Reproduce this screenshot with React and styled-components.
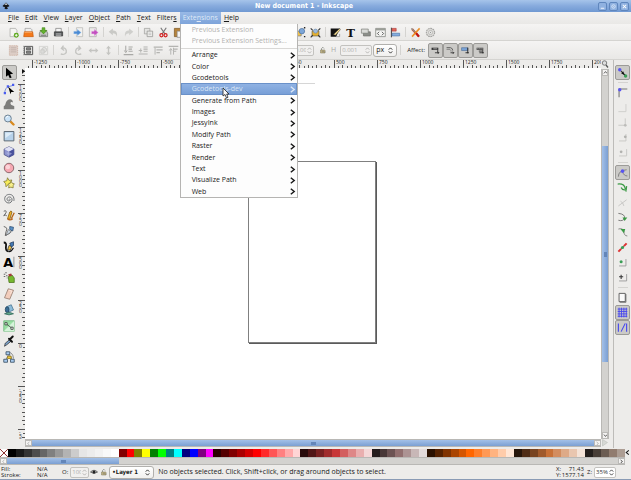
import React from "react";
import styled, { createGlobalStyle, css } from "styled-components";

const GlobalStyle = createGlobalStyle`
  * {
    box-sizing: border-box;
  }
  body {
    margin: 0;
    background: #edecea;
    color: #1a1a1a;
    font-family: "Open Sans", "Noto Sans", sans-serif;
    font-size: 7px;
    line-height: 10px;
  }
  button, input, select {
    font: inherit;
    color: inherit;
    margin: 0;
    padding: 0;
    border: 0;
    background: none;
    min-width: 0;
  }
  svg {
    display: block;
    flex: none;
  }
`;

const ICONS = {
  logo: (
    <>
      <path d="M8 1 L15 8 Q13 10 10 10 L12 13 Q8 16 5 13 L6 10 Q2 10 1 8 Z" fill="#16181c" />
      <path d="M8 2 L11 5 L9 6 L8 5 L6 6 L5 5 Z" fill="#d8dfe8" />
    </>
  ),
  minimize: <path d="M4 12 H12" stroke="#fff" strokeWidth="2" />,
  maximize: (
    <>
      <circle cx="8" cy="8" r="4" fill="none" stroke="#dce8f7" strokeWidth="2" />
      <circle cx="8" cy="8" r="1" fill="#fff" />
    </>
  ),
  close: <path d="M4 4 L12 12 M12 4 L4 12" stroke="#fff" strokeWidth="2.4" />,
  fileNew: (
    <>
      <path d="M3 2 H11 L13 5 V14 H3 Z" fill="#f4f4f2" stroke="#a5a5a2" />
      <circle cx="12" cy="12" r="3.6" fill="#58a618" />
      <path d="M12 10 V14 M10 12 H14" stroke="#fff" strokeWidth="1.3" />
    </>
  ),
  open: (
    <>
      <path d="M3 2 H11 L13 4 V9 H3 Z" fill="#eee" stroke="#999" />
      <path d="M2 7 H14 L15 14 H1 Z" fill="#f47a1c" stroke="#c95a08" />
      <path d="M2 8 H13" stroke="#fbb477" />
    </>
  ),
  save: (
    <>
      <path d="M2 9 L4 5 H12 L14 9 V14 H2 Z" fill="#c7c9c6" stroke="#6b6e69" />
      <path d="M6 1 H10 V5 H13 L8 10 L3 5 H6 Z" fill="#63b32e" stroke="#3c8010" strokeWidth=".8" />
      <path d="M4 12 H12" stroke="#555" />
    </>
  ),
  print: (
    <>
      <path d="M4 2 H12 V8 H4 Z" fill="#f5f5f5" stroke="#777" />
      <path d="M2 7 H14 V13 H2 Z" fill="#55585a" stroke="#333" />
      <path d="M4 10 H12 M4 12 H12" stroke="#ddd" />
    </>
  ),
  importFile: (
    <>
      <path d="M5 1 H14 V14 H5 Z" fill="#f2f2f0" stroke="#b4b4b0" />
      <path d="M1 6 H6 V3 L12 8 L6 13 V10 H1 Z" fill="#4b8bd3" stroke="#dce9f7" strokeWidth=".6" />
    </>
  ),
  exportFile: (
    <>
      <path d="M2 1 H12 V14 H2 Z" fill="#ecebe9" stroke="#a8a8a5" />
      <path d="M5 6 H9 V3 L15 8 L9 13 V10 H5 Z" fill="#c34fc0" stroke="#f3d7f2" strokeWidth=".6" />
    </>
  ),
  undo: <path d="M7 2 V5 C12 5 14 8 13 14 C12 10 10 9 7 9 V12 L1 7 Z" fill="#c9c9c6" />,
  redo: <path d="M9 2 V5 C4 5 2 8 3 14 C4 10 6 9 9 9 V12 L15 7 Z" fill="#cfcfcc" />,
  copy: (
    <>
      <path d="M2 2 H10 V10 H2 Z" fill="#e4e4e2" stroke="#9b9b98" />
      <path d="M6 6 H14 V14 H6 Z" fill="#ededeb" stroke="#8d8d8a" />
      <path d="M8 9 H12 M8 11 H12" stroke="#bbb" />
    </>
  ),
  cut: (
    <>
      <path d="M4 1 L10 10 M12 1 L6 10" stroke="#777" strokeWidth="1.6" />
      <circle cx="5" cy="12" r="2.2" fill="none" stroke="#d11f1f" strokeWidth="1.8" />
      <circle cx="11" cy="12" r="2.2" fill="none" stroke="#d11f1f" strokeWidth="1.8" />
    </>
  ),
  paste: (
    <>
      <path d="M2 2 H12 V14 H2 Z" fill="#b5833a" stroke="#7a5520" />
      <path d="M6 6 H14 V15 H6 Z" fill="#f4f4f4" stroke="#888" />
    </>
  ),
  group: (
    <>
      <path d="M2 6 H9 V13 H2 Z" fill="#f0c14b" stroke="#7c7c78" />
      <circle cx="10" cy="6" r="4" fill="#7ca6d8" stroke="#4d6f9b" />
      <path d="M1 1 H3 M13 1 H15 M1 14 H3 M13 14 H15" stroke="#222" strokeWidth="2" />
    </>
  ),
  ungroup: (
    <>
      <path d="M3 6 H13 V13 H3 Z" fill="#e7b12e" stroke="#6a6040" />
      <circle cx="8" cy="6" r="3" fill="#9dbbdc" stroke="#6683a6" strokeWidth=".8" />
      <path d="M1 2 L4 5 M15 2 L12 5 M1 15 L4 12 M15 15 L12 12" stroke="#333" strokeWidth="1.6" />
    </>
  ),
  fill: (
    <>
      <path d="M1 2 H14 L9 14 H1 Z" fill="#111" />
      <path d="M5 11 L14 2 L15 4 L8 12 Z" fill="#f2d98b" stroke="#333" strokeWidth=".7" />
      <path d="M9 14 H14 V10" fill="none" stroke="#888" />
    </>
  ),
  text: (
    <text x="8" y="14" textAnchor="middle" fontFamily="DejaVu Serif, serif" fontWeight="bold" fontSize="17" fill="#111">
      T
    </text>
  ),
  layers: (
    <>
      <path d="M5 7 H15 V13 H5 Z" fill="#8b8e89" stroke="#6a6c68" />
      <path d="M2 3 H12 V9 H2 Z" fill="#d9dad7" stroke="#777a75" />
    </>
  ),
  xml: (
    <>
      <path d="M1 2 H15 V14 H1 Z" fill="#f4f4f2" stroke="#777a75" />
      <path d="M1 2 H15 V5 H1 Z" fill="#9a9d97" />
      <path d="M6 7 L3.5 9.5 L6 12 M10 7 L12.5 9.5 L10 12" fill="none" stroke="#444" strokeWidth="1.2" />
    </>
  ),
  align: (
    <>
      <path d="M2 1 V15" stroke="#333" strokeWidth="1.4" />
      <path d="M3 2 H9 V6 H3 Z" fill="#e0675b" stroke="#a33" strokeWidth=".8" />
      <path d="M3 9 H14 V13 H3 Z" fill="#86aede" stroke="#3d669d" strokeWidth=".8" />
    </>
  ),
  prefs: (
    <>
      <path d="M3 3 L13 14" stroke="#d0451c" strokeWidth="3" />
      <path d="M2 2 L7 7" stroke="#8c8f8a" strokeWidth="2" />
      <path d="M14 2 L3 14" stroke="#eb8e26" strokeWidth="2.2" />
      <path d="M9 9 L13 14" stroke="#c01515" strokeWidth="3" />
    </>
  ),
  docPrefs: (
    <>
      <circle cx="8" cy="8" r="6" fill="#dedddb" stroke="#a3a3a0" strokeWidth="1.6" strokeDasharray="2.5 .9" />
      <circle cx="8" cy="8" r="3" fill="#efefed" stroke="#acaca8" />
      <circle cx="8" cy="8" r="1" fill="#999" />
    </>
  ),
  selectAll: (
    <>
      <path d="M2 1 H14 V15 H2 Z" fill="#dccdc6" stroke="#c9a898" strokeDasharray="2 1" />
      <path d="M4 4 H12 M4 7 H12 M4 10 H12" stroke="#b9aaa4" />
    </>
  ),
  selectLayers: (
    <>
      <path d="M2 2 H14 V14 H2 Z" fill="#e8e8e6" stroke="#555" strokeWidth="1.4" />
      <path d="M5 4 H11 V7 H5 Z M5 9 H11 V12 H5 Z" fill="#888" stroke="#444" />
      <path d="M0 1 V15" stroke="#555" strokeDasharray="2 1" />
    </>
  ),
  deselect: (
    <>
      <path d="M2 2 H14 V14 H2 Z" fill="none" stroke="#cbcbc8" />
      <circle cx="9" cy="7" r="3.5" fill="#e2e2e0" stroke="#c1c1be" />
      <path d="M4 7 H9 V12 H4 Z" fill="#dcdcda" stroke="#c4c4c1" />
    </>
  ),
  rotateLeft: <path d="M4 13 C9 15 13 12 12 8 C11 4 8 4 6 5 M8 1 L5 5 L9 8" fill="none" stroke="#c4c4c1" strokeWidth="2" />,
  rotateRight: <path d="M12 13 C7 15 3 12 4 8 C5 4 8 4 10 5 M8 1 L11 5 L7 8" fill="none" stroke="#c4c4c1" strokeWidth="2" />,
  flipH: <path d="M1 8 L5 4.5 V7 H11 V4.5 L15 8 L11 11.5 V9 H5 V11.5 Z" fill="#c4c4c1" />,
  flipV: <path d="M8 1 L11.5 5 H9 V11 H11.5 L8 15 L4.5 11 H7 V5 H4.5 Z" fill="#c4c4c1" />,
  lower: (
    <>
      <path d="M1 14 H15 M8 3 H14 M8 6 H13 M8 9 H14" stroke="#a9a9a6" strokeWidth="1.6" />
      <path d="M4 1 V9 M2 8 L4 11 L6 8" fill="none" stroke="#a3a3a0" strokeWidth="1.4" />
    </>
  ),
  lowerOne: (
    <>
      <path d="M8 3 H14 M8 6 H14 M1 13 H14 M8 9 H14" stroke="#b4b4b1" strokeWidth="1.6" />
      <path d="M4 5 V11 M1 8 H6" stroke="#b4b4b1" strokeWidth="1.4" />
    </>
  ),
  raiseOne: (
    <>
      <path d="M1 3 H14 M5 7 H14 M5 11 H10" stroke="#b4b4b1" strokeWidth="1.8" />
      <path d="M3 4 V14" stroke="#b4b4b1" strokeWidth="1.4" />
    </>
  ),
  raise: (
    <>
      <path d="M1 2 H15 M8 6 H14 M8 9 H12" stroke="#b4b4b1" strokeWidth="1.6" />
      <path d="M4 14 V6 M2 8 L4 5 L6 8 M8 4 V14" fill="none" stroke="#b4b4b1" strokeWidth="1.4" />
    </>
  ),
  lock: (
    <>
      <path d="M5 8 V5 Q8 0 10 5" fill="none" stroke="#888a85" strokeWidth="1.6" />
      <path d="M3 8 H12 V14 H3 Z" fill="#d9c98f" stroke="#77705a" />
      <path d="M5 10 H10 M5 12 H13" stroke="#555" />
    </>
  ),
  affectStroke: (
    <>
      <path d="M1 3 H13 V7 H1 Z" fill="#333" />
      <path d="M4 5 H11" stroke="#eee" />
      <path d="M12 7 V12 M7 12 H14 M12 10 L14 12 L12 14" fill="none" stroke="#222" strokeWidth="1.4" />
    </>
  ),
  affectCorner: (
    <>
      <path d="M1 3 H8 Q12 4 12 8" fill="none" stroke="#555" strokeWidth="1.6" />
      <path d="M1 6 H7 Q9 7 9 10" fill="none" stroke="#777" strokeWidth="1.4" />
      <path d="M8 12 H14 M12 10 L14 12 L12 14" fill="none" stroke="#222" strokeWidth="1.4" />
    </>
  ),
  affectGradient: (
    <>
      <path d="M1 3 H12 V8 H1 Z" fill="#7aa3d6" stroke="#4a6a93" />
      <path d="M12 3 V13 M8 12 H14" stroke="#222" strokeWidth="1.6" />
    </>
  ),
  affectPattern: (
    <>
      <path d="M1 3 H13 V7 H1 Z" fill="#555" />
      <path d="M2 4 H12" stroke="#bbb" strokeDasharray="2 1" />
      <path d="M12 7 V13 M6 12 H14 M5 9 H11" stroke="#222" strokeWidth="1.5" />
    </>
  ),
  selector: <path d="M4 1 L4 13 L7 10.5 L9 15 L11.5 14 L9.5 9.5 L13.5 9 Z" fill="#000" />,
  node: (
    <>
      <path d="M2 14 Q3 6 7 5 L14 3" fill="none" stroke="#6f86d8" strokeWidth="1.2" />
      <path d="M1 12 H4 V15 H1 Z M5 3 H8 V6 H5 Z M12 1 H15 V4 H12 Z" fill="#4a5cf0" />
      <path d="M7 5 L15 12 L11 12 L10 15 Z" fill="#000" />
    </>
  ),
  tweak: <path d="M1 15 V11 C4 10 3 5 6 3 C9 0 14 2 13 6 C12 5 10 5 10 7 C10 10 14 10 15 11 V15 Z" fill="#7d7d7b" />,
  zoom: (
    <>
      <path d="M9 9 L14 14" stroke="#d98a1f" strokeWidth="3.2" strokeLinecap="round" />
      <circle cx="6.5" cy="6" r="4.6" fill="#c9e2f7" stroke="#6d7f90" strokeWidth="1.3" />
      <path d="M4 5 Q5 3 7 3" fill="none" stroke="#fff" strokeWidth="1.3" />
    </>
  ),
  rect: (
    <>
      <path d="M1.5 2 H14.5 V14.5 H1.5 Z" fill="#b7d2ea" stroke="#55606a" strokeWidth="1.2" />
      <path d="M3 3.5 H13 L3 11 Z" fill="#dcebf7" />
    </>
  ),
  box: (
    <>
      <path d="M8 1 L14.5 4 V11.5 L8 15 L1.5 11.5 V4 Z" fill="#8d93cf" stroke="#4a4e80" />
      <path d="M8 1 L14.5 4 L8 7.5 L1.5 4 Z" fill="#dfe1f5" />
      <path d="M8 7.5 L14.5 4 V11.5 L8 15 Z" fill="#4a529c" />
      <path d="M4 9 L8 8 L12 10 L8 13 Z" fill="#b8bce6" opacity=".6" />
    </>
  ),
  ellipse: (
    <>
      <circle cx="8" cy="8" r="6.3" fill="#f6a8b2" stroke="#7b565b" strokeWidth="1.1" />
      <circle cx="6.5" cy="6.5" r="3" fill="#fbd3d8" />
    </>
  ),
  star: (
    <>
      <path d="M6 1 L8 4.5 L12 4 L9.5 7.5 L11 11 L7 10 L4 13 L3.5 9 L1 6 L5 5 Z" fill="#f7ec5a" stroke="#7b7430" />
      <path d="M11 6 L12.5 8.5 L15 9 L13.5 11.5 L13.5 14.5 L10.5 13.5 L7.5 14.5 L8 11.5 L6.5 9.5 L9.5 8.5 Z" fill="#f9f08a" stroke="#7b7430" />
    </>
  ),
  spiral: (
    <path
      d="M8 8.5 C9 7 10.5 9 9 10.2 C7 11.5 4.8 9.5 5.5 7.3 C6.5 4.5 11 4.6 12 8 C12.8 11.5 9.5 14 6.5 13.2 C2.5 12 1.5 8 2.8 5.2 C4.5 1.5 10 .8 12.8 3.5 C14.5 5.5 15 8 14.5 10.5"
      fill="none"
      stroke="#62666a"
      strokeWidth="1.2"
    />
  ),
  pencil: (
    <>
      <path d="M1 3 Q5 1 4 5 L1 9 Q3 7 5 9" fill="none" stroke="#666" strokeWidth="1.3" />
      <path d="M6 13 L9 4 Q11 1 12 4 L9 14 Z" fill="#f0b429" stroke="#7d5a12" />
      <path d="M11 13 L15 5 M6 13 Q9 16 13 13" fill="none" stroke="#b7651c" strokeWidth="1.8" />
    </>
  ),
  bezier: (
    <>
      <path d="M1 2 Q7 3 4 9 L3 14 L9 11 L12 6" fill="#e9e9e7" stroke="#4d4d4d" strokeWidth="1.1" />
      <path d="M9 2 L14 3 L13 8 L9 6 Z" fill="#5b93c9" stroke="#2c4b6d" />
      <path d="M7 6 L11 9 L4 14 Z" fill="#c9d5df" stroke="#555" strokeWidth=".7" />
    </>
  ),
  calligraphy: (
    <>
      <path d="M1 2 Q5 2 4 7 Q3 13 7 14" fill="none" stroke="#111" strokeWidth="2.4" />
      <path d="M6 12 L8 6 L12 7 L10 12 Z" fill="#f0c340" stroke="#333" />
      <path d="M9 3 L14 1 L14 6 L11 8 Z" fill="#447ab5" stroke="#223c5c" />
      <path d="M7 14 Q11 15 14 9" fill="none" stroke="#111" strokeWidth="1.5" />
    </>
  ),
  letter: (
    <>
      <text x="7" y="14" textAnchor="middle" fontFamily="DejaVu Sans, sans-serif" fontWeight="bold" fontSize="17" fill="#000">
        A
      </text>
      <path d="M14.5 1 V15" stroke="#777" />
    </>
  ),
  spray: (
    <>
      <path d="M7 6 L12 4 L15 8 V14 H8 Z" fill="#76b82f" stroke="#4a701c" />
      <path d="M7 3 L11 2 L12 5 L8 6 Z" fill="#a33c3c" />
      <path d="M1 3 H3 M4 5 H6 M1 6 H3 M3 1 H5 M5 8 H6" stroke="#666" strokeWidth="1.3" />
    </>
  ),
  eraser: (
    <>
      <path d="M7 1 L14 3 L9 15 L2 13 Z" fill="#f2cdbc" stroke="#8e7467" />
      <path d="M8 3 L12 4 L10 8" fill="none" stroke="#fbeae2" />
    </>
  ),
  bucket: (
    <>
      <path d="M4 4 L11 1 L14 8 L7 11 Z" fill="#8dbcd9" stroke="#44708f" />
      <ellipse cx="5.5" cy="7.5" rx="2.5" ry="3.8" fill="#3a6d94" stroke="#25445c" />
      <path d="M2 13 Q8 9 14 13 Q8 16 2 13 Z" fill="#64a98e" stroke="#33685a" />
    </>
  ),
  gradient: (
    <>
      <path d="M1 1 H15 V15 H1 Z" fill="#9adfa4" stroke="#67b375" />
      <path d="M1 15 L15 1 V15 Z" fill="#d5f3d9" />
      <path d="M4 5 L12 11" stroke="#333" />
      <path d="M2.5 3.5 H5.5 V6.5 H2.5 Z M10.5 9.5 H13.5 V12.5 H10.5 Z" fill="#e8f5ea" stroke="#333" />
    </>
  ),
  dropper: (
    <>
      <path d="M2 15 L3 11 L9 6 L11 8 L5 13 Z" fill="#7ba3cc" stroke="#333" />
      <path d="M8 5 L12 9 M9 6 L13 2" stroke="#111" strokeWidth="2.6" strokeLinecap="round" />
    </>
  ),
  connector: (
    <>
      <path d="M8 4 L4 11 M8 4 L12 11 M10 2 Q14 5 14 10" fill="none" stroke="#777" strokeWidth="1.1" />
      <path d="M4 1 H9 V5 H4 Z M1 11 H6 V15 H1 Z M10 11 H15 V15 H10 Z" fill="#a8cbef" stroke="#3c5064" strokeWidth="1.1" />
      <path d="M6 7 H11 V10 H6 Z" fill="#f1cb35" stroke="#8d7315" />
    </>
  ),
  snap: (
    <>
      <path d="M4 4 L12 12" stroke="#222" strokeWidth="1.5" />
      <circle cx="4" cy="4" r="2.5" fill="#5a55f0" />
      <circle cx="12.5" cy="13" r="2.5" fill="#3a9e55" />
      <path d="M6 9 L9 6 L11 12 Z" fill="#111" />
    </>
  ),
  snapBox: (
    <>
      <path d="M3 15 V3 H15" fill="none" stroke="#777" strokeWidth="1.6" />
      <circle cx="4" cy="4" r="2.5" fill="#5a55f0" />
    </>
  ),
  snapEdge: <path d="M2 14 H13 V3" fill="none" stroke="#cfcfcc" strokeWidth="1.4" />,
  snapCorner: (
    <>
      <path d="M2 12 H12 V2" fill="none" stroke="#c9c9c6" strokeWidth="1.4" />
      <circle cx="12" cy="12" r="2" fill="#bdbdba" />
    </>
  ),
  snapMid: (
    <>
      <path d="M3 13 H13 V3" fill="none" stroke="#c9c9c6" strokeWidth="1.4" />
      <circle cx="12" cy="7" r="2" fill="#b2b2af" />
    </>
  ),
  snapCenter: (
    <>
      <path d="M3 13 H14 V3" fill="none" stroke="#c9c9c6" strokeWidth="1.4" />
      <circle cx="6" cy="7" r="2" fill="#b2b2af" />
    </>
  ),
  snapNode: (
    <>
      <path d="M2 14 Q2 5 14 4 M8 7 Q10 13 15 13" fill="none" stroke="#777" strokeWidth="1.3" />
      <circle cx="8" cy="6" r="2.6" fill="#5a55f0" />
    </>
  ),
  snapPath: (
    <path d="M1 3 Q11 2 12 10 M6 8 Q8 13 14 11 M14 6 L13 14" fill="none" stroke="#3b9a45" strokeWidth="1.8" />
  ),
  snapCross: <path d="M2 13 L14 4 M5 6 Q9 8 10 13" fill="none" stroke="#c4c4c1" strokeWidth="1.3" />,
  snapCusp: (
    <>
      <path d="M2 2 Q12 3 11 9 Q9 14 2 12" fill="none" stroke="#666" strokeWidth="1.2" />
      <path d="M8 8 H15 L11 13 Z" fill="#3b9a45" />
    </>
  ),
  snapSmooth: (
    <>
      <path d="M2 3 Q8 1 10 6 Q10 13 15 13" fill="none" stroke="#777" strokeWidth="1.2" />
      <path d="M5 3 L12 3 L10 9 Z" fill="#3b9a45" />
    </>
  ),
  snapLine: (
    <>
      <path d="M3 13 L13 3" stroke="#555" strokeWidth="1.2" />
      <path d="M2 14 L6 10 M10 6 L14 2" stroke="#d33" strokeWidth="3" />
      <circle cx="8" cy="8" r="2.3" fill="#3a9e55" />
    </>
  ),
  snapObject: (
    <>
      <path d="M3 13 H13 V3" fill="none" stroke="#999" strokeWidth="1.3" />
      <circle cx="6" cy="7" r="2.2" fill="#3a9e55" />
    </>
  ),
  snapRotation: (
    <>
      <path d="M3 13 H14 V3" fill="none" stroke="#999" strokeWidth="1.3" />
      <path d="M6 4 V10 M3 7 H9" stroke="#333" strokeWidth="1.5" />
    </>
  ),
  snapPage: (
    <>
      <path d="M3 2 H12 V14 H3 Z" fill="#fafafa" stroke="#555" strokeWidth="1.3" />
      <path d="M13 3 V15 H4" fill="none" stroke="#555" />
    </>
  ),
  snapGrid: (
    <path d="M3 1 V15 M6.5 1 V15 M10 1 V15 M13.5 1 V15 M1 3 H15 M1 6.5 H15 M1 10 H15 M1 13.5 H15" stroke="#4545ef" strokeWidth="1.3" />
  ),
  snapGuide: <path d="M2 2 V14 M6 14 L12 2 M14 2 V14" stroke="#4545ef" strokeWidth="1.6" />,
  eye: (
    <>
      <path d="M1 8 Q8 1 15 8 Q8 14 1 8 Z" fill="#d5d5d2" stroke="#444" strokeWidth="1.5" />
      <circle cx="8" cy="8" r="3" fill="#222" />
    </>
  ),
  view: (
    <>
      <circle cx="7" cy="6" r="4.5" fill="#ddd" stroke="#666" strokeWidth="1.6" />
      <path d="M10 10 L14 15" stroke="#555" strokeWidth="2.6" />
    </>
  ),
  cms: <path d="M3 1 L13 7 L3 14 Z" fill="#d6d8d4" stroke="#b5b8b3" />,
  up: <path d="M3 11 L8 5 L13 11" fill="none" stroke="#444" strokeWidth="2.6" />,
  down: <path d="M3 5 L8 11 L13 5" fill="none" stroke="#444" strokeWidth="2.6" />,
  left: <path d="M11 3 L5 8 L11 13" fill="none" stroke="currentColor" strokeWidth="2.4" />,
  right: <path d="M5 3 L11 8 L5 13" fill="none" stroke="currentColor" strokeWidth="2.6" />,
  spin: <path d="M4 6 L8 2 L12 6 M4 10 L8 14 L12 10" fill="none" stroke="currentColor" strokeWidth="2" />,
};

const Icon = ({ name, size = 12 }) => (
  <svg width={size} height={size} viewBox="0 0 16 16" aria-hidden="true">
    {ICONS[name]}
  </svg>
);

const Window = styled.div`
  display: flex;
  flex-direction: column;
  min-height: 100vh;
  border-bottom: 1px solid #8a9bb5;
`;

const TitleBar = styled.header`
  display: flex;
  align-items: center;
  height: 12px;
  padding: 0 2px;
  background: linear-gradient(#a6c4ea, #86aadd 50%, #7099d2);
  color: #fff;

  h1 {
    flex: 1;
    margin: 0;
    text-align: center;
    font: bold 7px/12px "DejaVu Sans Condensed", "DejaVu Sans", sans-serif;
  }
`;

const TitleButtons = styled.div`
  display: flex;
  gap: 2px;
`;

const TitleButton = styled.button`
  display: grid;
  place-items: center;
  width: 9px;
  height: 9px;
  border: 1px solid #5f86bd;
  border-radius: 2px;
  background: #8fb1e0;
`;

const MenuBar = styled.nav`
  display: flex;
  height: 12px;
  padding-left: 5px;
  background: linear-gradient(#f3f2f1, #e9e8e6);
`;

const MenuItem = styled.button`
  height: 12px;
  padding: 0 3px;
  line-height: 12px;
  ${(p) =>
    p.$active &&
    css`
      background: linear-gradient(#98b9e6, #7ea4da);
      color: #dfe9f6;
    `}
`;

const MenuHolder = styled.div`
  position: relative;
  z-index: 2;
`;

const Popup = styled.div`
  position: absolute;
  top: 100%;
  left: 0;
  width: 118px;
  border: 1px solid #b5b4b2;
  border-top: 0;
  background: #fdfdfd;
`;

const PopupRows = styled.div`
  display: grid;
  grid-auto-rows: 1fr;
  height: ${(p) => p.$height}px;
`;

const PopupSeparator = styled.hr`
  height: 3px;
  margin: 0;
  border: 0;
  border-bottom: 1px solid #d9d8d6;
`;

const PopupItem = styled.button`
  position: relative;
  display: flex;
  align-items: center;
  justify-content: space-between;
  padding: 1px 0 0 11px;
  text-align: left;
  white-space: nowrap;

  &:disabled {
    color: #b3b2b0;
  }
  ${(p) =>
    p.$active &&
    css`
      background: linear-gradient(#92b4e4, #759dd6);
      outline: 1px solid #6a91c9;
      outline-offset: -1px;
      color: #dbe6f5;
    `}
`;

const Pointer = styled.svg`
  position: absolute;
  left: 41px;
  top: 4px;
  z-index: 3;
`;

const ToolBar = styled.div`
  display: flex;
  align-items: center;
  height: ${(p) => p.$height}px;
  padding-left: 6px;
  border-bottom: 1px solid #d5d4d1;
  background: linear-gradient(#f5f4f3, #e9e8e6);
`;

const ToolGroup = styled.div`
  display: flex;
  align-items: center;
  gap: ${(p) => p.$gap || 0}px;
  flex: ${(p) => (p.$wide ? "0 0 287px" : "none")};
`;

const ToolButton = styled.button`
  display: grid;
  place-items: center;
  width: 15px;
  height: 15px;
  border-radius: 2px;
  border: 1px solid ${(p) => (p.$pressed ? "#9c9b98" : "transparent")};
  background: ${(p) => (p.$pressed ? "#cbcac7" : "none")};
`;

const Divider = styled.span`
  flex: none;
  width: 5px;
  height: 10px;
  background: linear-gradient(#d4d3d0, #d4d3d0) center / 1px 100% no-repeat;
`;

const SideDivider = styled.span`
  width: 10px;
  height: 5px;
  background: linear-gradient(#d4d3d0, #d4d3d0) center / 100% 1px no-repeat;
`;

const Field = styled.label`
  display: flex;
  align-items: center;
  gap: ${(p) => p.$gap || 4}px;
  color: ${(p) => (p.$dim ? "#a9a8a6" : "inherit")};
`;

const SpinBox = styled.span`
  display: flex;
  align-items: center;
  justify-content: space-between;
  width: ${(p) => p.$width}px;
  height: 11px;
  border: 1px solid #c3c2bf;
  border-radius: 2px;
  background: ${(p) => (p.$dim ? "#f1f0ef" : "#fff")};
  color: ${(p) => (p.$dim ? "#b0afad" : "#333")};

  input {
    flex: 1;
    width: 0;
    padding-left: 1px;
    font-size: 6px;
    line-height: 8px;
    text-align: ${(p) => p.$align || "left"};
  }
`;

const SelectBox = styled.span`
  display: flex;
  align-items: center;
  width: ${(p) => p.$width}px;
  height: 13px;
  padding: 0 2px;
  border: 1px solid #b1b0ad;
  border-radius: 3px;
  background: linear-gradient(#fff, #f1f0ee);

  select {
    flex: 1;
    appearance: none;
    line-height: 10px;
    ${(p) => p.$bold && `font: bold 6px/10px "DejaVu Sans Condensed", sans-serif;`}
  }
`;

const Affect = styled.div`
  display: flex;
  align-items: center;
  padding-left: 3px;
  font-size: 6px;
  span {
    margin-right: 3px;
  }
`;

const Main = styled.main`
  flex: 1;
  display: grid;
  grid-template-columns: 18px 1fr 18px;
`;

const ToolBox = styled.aside`
  padding-top: 5px;
`;

const ToolList = styled.div`
  display: grid;
  grid-auto-rows: 1fr;
  justify-items: center;
  align-items: center;
  height: 300px;
`;

const Workspace = styled.section`
  display: grid;
  grid-template-columns: 7px 1fr 12px;
  grid-template-rows: 8px 1fr 9px;
  min-width: 0;
`;

const RulerTop = styled.svg`
  grid-column: 2;
  width: 100%;
  height: 8px;
  font-size: 5px;
`;

const RulerLeft = styled.svg`
  grid-column: 1;
  grid-row: 2;
  width: 7px;
  height: 100%;
  font-size: 5px;
`;

const Canvas = styled.div`
  grid-column: 2;
  grid-row: 2;
  position: relative;
  display: grid;
  place-items: center;
  padding: 0 2px 4px 0;
  background: #fff;
`;

const Page = styled.div`
  width: 128px;
  height: 182px;
  border: 1px solid #808080;
  box-shadow: 1px 1px 0 #5a5a5a;
`;

const Guide = styled.div`
  position: absolute;
  top: 15px;
  left: 200px;
  width: 90px;
  height: 1px;
  background: #d6d6d6;
`;

const ScrollBar = styled.div`
  display: flex;
  flex-direction: ${(p) => (p.$vertical ? "column" : "row")};
  ${(p) => (p.$vertical ? "width: 8px;" : "height: 8px;")}
  margin-right: ${(p) => p.$inset || 0}px;
  background: #d3d2cf;
  border: 0 solid #b9b8b5;
  border-width: ${(p) => (p.$vertical ? "0 1px" : "1px 0")};
`;

const ScrollArrow = styled.button`
  display: grid;
  place-items: center;
  flex: 0 0 7px;
  background: #f4f3f2;
  outline: 1px solid #bbbab7;
  outline-offset: -1px;
  color: ${(p) => (p.$dim ? "#aaa" : "#333")};
`;

const Thumb = styled.div`
  display: grid;
  place-items: center;
  flex: ${(p) => p.$grow};
  background: linear-gradient(${(p) => (p.$vertical ? "90deg" : "180deg")}, #a3c0e8, #7b9fd2);

  &::after {
    content: "";
    width: ${(p) => (p.$vertical ? 3 : 5)}px;
    height: ${(p) => (p.$vertical ? 5 : 3)}px;
    background: #6486b9;
  }
`;

const Gap = styled.div`
  flex: ${(p) => p.$grow};
`;

const ZoomCorner = styled.div`
  grid-column: 3;
  grid-row: ${(p) => p.$row};
`;

const SideScroll = styled.div`
  grid-column: 3;
  grid-row: 2;
  display: flex;
  padding-top: 1px;
`;

const BottomScroll = styled.div`
  grid-column: 2;
  grid-row: 3;
`;

const SnapBar = styled.aside`
  display: flex;
  flex-direction: column;
  align-items: center;
  padding-top: 5px;
  border-left: 1px solid #bdbcb9;
`;

const PaletteRow = styled.div`
  display: flex;
  align-items: center;
  height: 9px;
`;

const Swatches = styled.div`
  display: flex;
  flex: 1;
  height: 8px;
`;

const Swatch = styled.button`
  flex: 1;
  background: ${(p) => p.$color};
  svg {
    width: 100%;
    height: 8px;
  }
`;

const StatusBar = styled.footer`
  display: flex;
  align-items: center;
  height: 14px;
  padding-right: 15px;
  font-size: 6px;
  line-height: 6px;
`;

const Style = styled.dl`
  display: grid;
  grid-template-columns: 36px 25px;
  margin: 0;
  padding-left: 1px;
  dd {
    margin: 0;
  }
`;

const Message = styled.p`
  flex: 1;
  margin: 0 0 0 4px;
  font-size: 7px;
  line-height: 10px;
  white-space: nowrap;
`;

const Coords = styled.dl`
  display: grid;
  grid-template-columns: 5px 23px;
  margin: 0 3px 0 0;
  dd {
    margin: 0;
    text-align: right;
  }
`;

const StatusIcon = styled.button`
  padding: 0 1px;
`;

const LETTERS = [
  ["", "F", "ile"],
  ["", "E", "dit"],
  ["", "V", "iew"],
  ["", "L", "ayer"],
  ["", "O", "bject"],
  ["", "P", "ath"],
  ["", "T", "ext"],
  ["Filter", "s", ""],
];

const SUBMENUS = [
  "Arrange", "Color", "Gcodetools", "Gcodetools-dev", "Generate from Path", "Images",
  "JessyInk", "Modify Path", "Raster", "Render", "Text", "Visualize Path", "Web",
];

const COMMANDS = [
  "fileNew", "open", "save", "print", "|", "importFile", "exportFile", "|",
  "undo", "redo", "|", "copy", "cut", "paste",
];
const DIALOGS = ["group", "ungroup", "|", "fill", "text", "layers", "xml", "align", "|", "prefs", "docPrefs"];
const OPTIONS = [
  "selectAll", "selectLayers", "deselect", "|", "rotateLeft", "rotateRight", "flipH", "flipV", "|",
  "lower", "lowerOne", "raiseOne", "raise",
];
const AFFECT = ["affectStroke", "affectCorner", "affectGradient", "affectPattern"];
const TOOLS = [
  "selector", "node", "tweak", "zoom", "rect", "box", "ellipse", "star", "spiral", "pencil",
  "bezier", "calligraphy", "letter", "spray", "eraser", "bucket", "gradient", "dropper", "connector",
];
const SNAPS = [
  "snap", "|", "snapBox", "snapEdge", "snapCorner", "snapMid", "snapCenter", "|",
  "snapNode", "snapPath", "snapCross", "snapCusp", "snapSmooth", "snapLine", "snapObject", "snapRotation", "|",
  "snapPage", "snapGrid", "snapGuide",
];
const PRESSED = ["selector", "snap", "snapNode", "snapGrid", "snapGuide", ...AFFECT];

const PALETTE = (
  "000000 1a1a1a 333333 4d4d4d 666666 808080 999999 b3b3b3 cccccc e6e6e6 ececec f2f2f2 f9f9f9 ffffff " +
  "800000 ff0000 808000 ffff00 008000 00ff00 008080 00ffff 000080 0000ff 800080 ff00ff " +
  "2b0000 550000 800000 aa0000 d40000 ff0000 ff2a2a ff5555 ff8080 ffaaaa ffd5d5 " +
  "280b0b 501616 782121 a02c2c c83737 d35f5f de8787 e9afaf f4d7d7 " +
  "241c1c 483737 6c5353 916f6f ac9393 c8b7b7 e3dbdb " +
  "2b1100 552200 803300 aa4400 d45500 ff6600 ff7f2a ff9955 ffb380 ffccaa ffe6d5 " +
  "28170b 502d16 784421 a05a2c c87137 d38d5f deaa87 e9c6af f4e3d7 " +
  "241f1c 483e37 6c5d53 917c6f ac9d93"
).split(" ");

// 250 document units between two labelled marks, 25 between two ticks
const MAJOR = 43.1;

const marks = (count) => Array.from({ length: count }, (_, i) => i);

const tickPath = (start, end, vertical, depth) => {
  let d = "";
  for (let i = -3; start + (i * MAJOR) / 10 < end; i++) {
    const at = Math.round(start + (i * MAJOR) / 10) + 0.5;
    const len = i % 10 === 0 ? depth : i % 2 === 0 ? 3 : 2;
    d += vertical ? `M${depth} ${at}h${-len}` : `M${at} ${depth}v${-len}`;
  }
  return d;
};

const Buttons = ({ names, SeparatorTag = Divider, size }) =>
  names.map((name, i) =>
    name === "|" ? (
      <SeparatorTag key={i} />
    ) : (
      <ToolButton key={name} aria-label={name} $pressed={PRESSED.includes(name)}>
        <Icon name={name} size={size} />
      </ToolButton>
    )
  );

const ExtensionsMenu = () => (
  <MenuHolder>
    <MenuItem $active>
      Exte<u>n</u>sions
    </MenuItem>
    <Popup>
      <PopupRows $height={22}>
        <PopupItem disabled>Previous Extension</PopupItem>
        <PopupItem disabled>Previous Extension Settings...</PopupItem>
      </PopupRows>
      <PopupSeparator />
      <PopupRows $height={148}>
        {SUBMENUS.map((label) => {
          const active = label === "Gcodetools-dev";
          return (
            <PopupItem key={label} $active={active}>
              {label}
              <Icon name="right" size={9} />
              {active && (
                <Pointer width="8" height="12" viewBox="0 0 8 12">
                  <path d="M1 1 V9 L3 7.5 L4.5 11 L6 10.3 L4.7 7 H7 Z" fill="#f8f8f8" stroke="#222" strokeWidth=".8" />
                </Pointer>
              )}
            </PopupItem>
          );
        })}
      </PopupRows>
    </Popup>
  </MenuHolder>
);

const Rulers = () => (
  <>
    <RulerTop>
      <path d={tickPath(7, 576, false, 8)} stroke="#555" />
      {marks(14).map((i) => (
        <text key={i} x={Math.round(7 + i * MAJOR) + 2} y="4" fill="#222">
          {i * 250 - 1250}
        </text>
      ))}
    </RulerTop>
    <RulerLeft>
      <path d={tickPath(16, 372, true, 7)} stroke="#555" />
      <path d="M4 1 L7 3 L4 6 Z" fill="#111" />
      {marks(9).map((i) =>
        String(1500 - i * 250)
          .split("")
          .map((digit, n) => (
            <text key={`${i}-${n}`} x="1" y={Math.round(16 + i * MAJOR) + 5 + n * 4} fill="#333">
              {digit}
            </text>
          ))
      )}
    </RulerLeft>
  </>
);

const App = () => (
  <Window>
    <GlobalStyle />
    <TitleBar>
      <Icon name="logo" size={8} />
      <h1>New document 1 - Inkscape</h1>
      <TitleButtons>
        {["minimize", "maximize", "close"].map((name) => (
          <TitleButton key={name} aria-label={name}>
            <Icon name={name} size={7} />
          </TitleButton>
        ))}
      </TitleButtons>
    </TitleBar>

    <MenuBar>
      {LETTERS.map(([before, key, after]) => (
        <MenuItem key={before + key}>
          {before}
          <u>{key}</u>
          {after}
        </MenuItem>
      ))}
      <ExtensionsMenu />
      <MenuItem>
        <u>H</u>elp
      </MenuItem>
    </MenuBar>

    <ToolBar $height={17}>
      <ToolGroup $wide>
        <Buttons names={COMMANDS} size={11} />
      </ToolGroup>
      <ToolGroup>
        <Buttons names={DIALOGS} size={11} />
      </ToolGroup>
    </ToolBar>

    <ToolBar $height={19}>
      <ToolGroup $wide>
        <Buttons names={OPTIONS} size={11} />
      </ToolGroup>
      <ToolGroup $gap={1}>
        <SpinBox $width={21} $dim>
          <input aria-label="Width" defaultValue="0.001" disabled />
          <Icon name="spin" size={7} />
        </SpinBox>
        <ToolButton aria-label="Lock ratio">
          <Icon name="lock" size={8} />
        </ToolButton>
        <Field $dim>
          H
          <SpinBox $width={32} $dim>
            <input defaultValue="0.001" disabled />
            <Icon name="spin" size={7} />
          </SpinBox>
        </Field>
        <SelectBox $width={24}>
          <select aria-label="Unit">
            <option>px</option>
          </select>
          <Icon name="spin" size={7} />
        </SelectBox>
        <Divider />
        <Affect>
          <span>Affect:</span>
          <Buttons names={AFFECT} size={9} />
        </Affect>
      </ToolGroup>
    </ToolBar>

    <Main>
      <ToolBox>
        <ToolList>
          <Buttons names={TOOLS} size={12} />
        </ToolList>
      </ToolBox>
      <Workspace>
        <Rulers />
        <Canvas>
          <Guide />
          <Page />
        </Canvas>
        <ZoomCorner $row={1}>
          <Icon name="view" size={8} />
        </ZoomCorner>
        <SideScroll>
          <ScrollBar $vertical>
            <ScrollArrow aria-label="Scroll up">
              <Icon name="up" size={5} />
            </ScrollArrow>
            <Gap $grow={70} />
            <Thumb $vertical $grow={215} />
            <Gap $grow={70} />
            <ScrollArrow aria-label="Scroll down">
              <Icon name="down" size={5} />
            </ScrollArrow>
          </ScrollBar>
        </SideScroll>
        <BottomScroll>
          <ScrollBar>
            <ScrollArrow aria-label="Scroll left" $dim>
              <Icon name="left" size={5} />
            </ScrollArrow>
            <Thumb $grow={1} />
            <ScrollArrow aria-label="Scroll right" $dim>
              <Icon name="right" size={5} />
            </ScrollArrow>
          </ScrollBar>
        </BottomScroll>
        <ZoomCorner $row={3}>
          <Icon name="cms" size={8} />
        </ZoomCorner>
      </Workspace>
      <SnapBar>
        <Buttons names={SNAPS} SeparatorTag={SideDivider} size={11} />
      </SnapBar>
    </Main>

    <PaletteRow>
      <Swatches>
        <Swatch aria-label="None" $color="#fff">
          <svg viewBox="0 0 8 8">
            <path d="M0 0 L8 8 M8 0 L0 8" stroke="#8c2a2a" />
          </svg>
        </Swatch>
        {PALETTE.map((color, i) => (
          <Swatch key={i} aria-label={`#${color}`} $color={`#${color}`} />
        ))}
      </Swatches>
      <Icon name="left" size={7} />
    </PaletteRow>
    <ScrollBar $inset={6}>
      <ScrollArrow aria-label="Scroll palette left" $dim>
        <Icon name="left" size={5} />
      </ScrollArrow>
      <Thumb $grow={112} />
      <Gap $grow={498} />
      <ScrollArrow aria-label="Scroll palette right">
        <Icon name="right" size={5} />
      </ScrollArrow>
    </ScrollBar>

    <StatusBar>
      <Style>
        <dt>Fill:</dt>
        <dd>N/A</dd>
        <dt>Stroke:</dt>
        <dd>N/A</dd>
      </Style>
      <Field $gap={2}>
        O:
        <SpinBox $width={19} $dim>
          <input defaultValue="100" disabled />
          <Icon name="spin" size={7} />
        </SpinBox>
      </Field>
      <StatusIcon aria-label="Layer visible">
        <Icon name="eye" size={8} />
      </StatusIcon>
      <StatusIcon aria-label="Layer lock">
        <Icon name="lock" size={8} />
      </StatusIcon>
      <SelectBox $width={45} $bold>
        <select aria-label="Current layer">
          <option>•Layer 1</option>
        </select>
        <Icon name="spin" size={7} />
      </SelectBox>
      <Message>No objects selected. Click, Shift+click, or drag around objects to select.</Message>
      <Coords>
        <dt>X:</dt>
        <dd>71.43</dd>
        <dt>Y:</dt>
        <dd>1577.14</dd>
      </Coords>
      <Field $gap={2}>
        Z:
        <SpinBox $width={22} $align="center">
          <input defaultValue="35%" />
          <Icon name="spin" size={7} />
        </SpinBox>
      </Field>
    </StatusBar>
  </Window>
);

export default App;
